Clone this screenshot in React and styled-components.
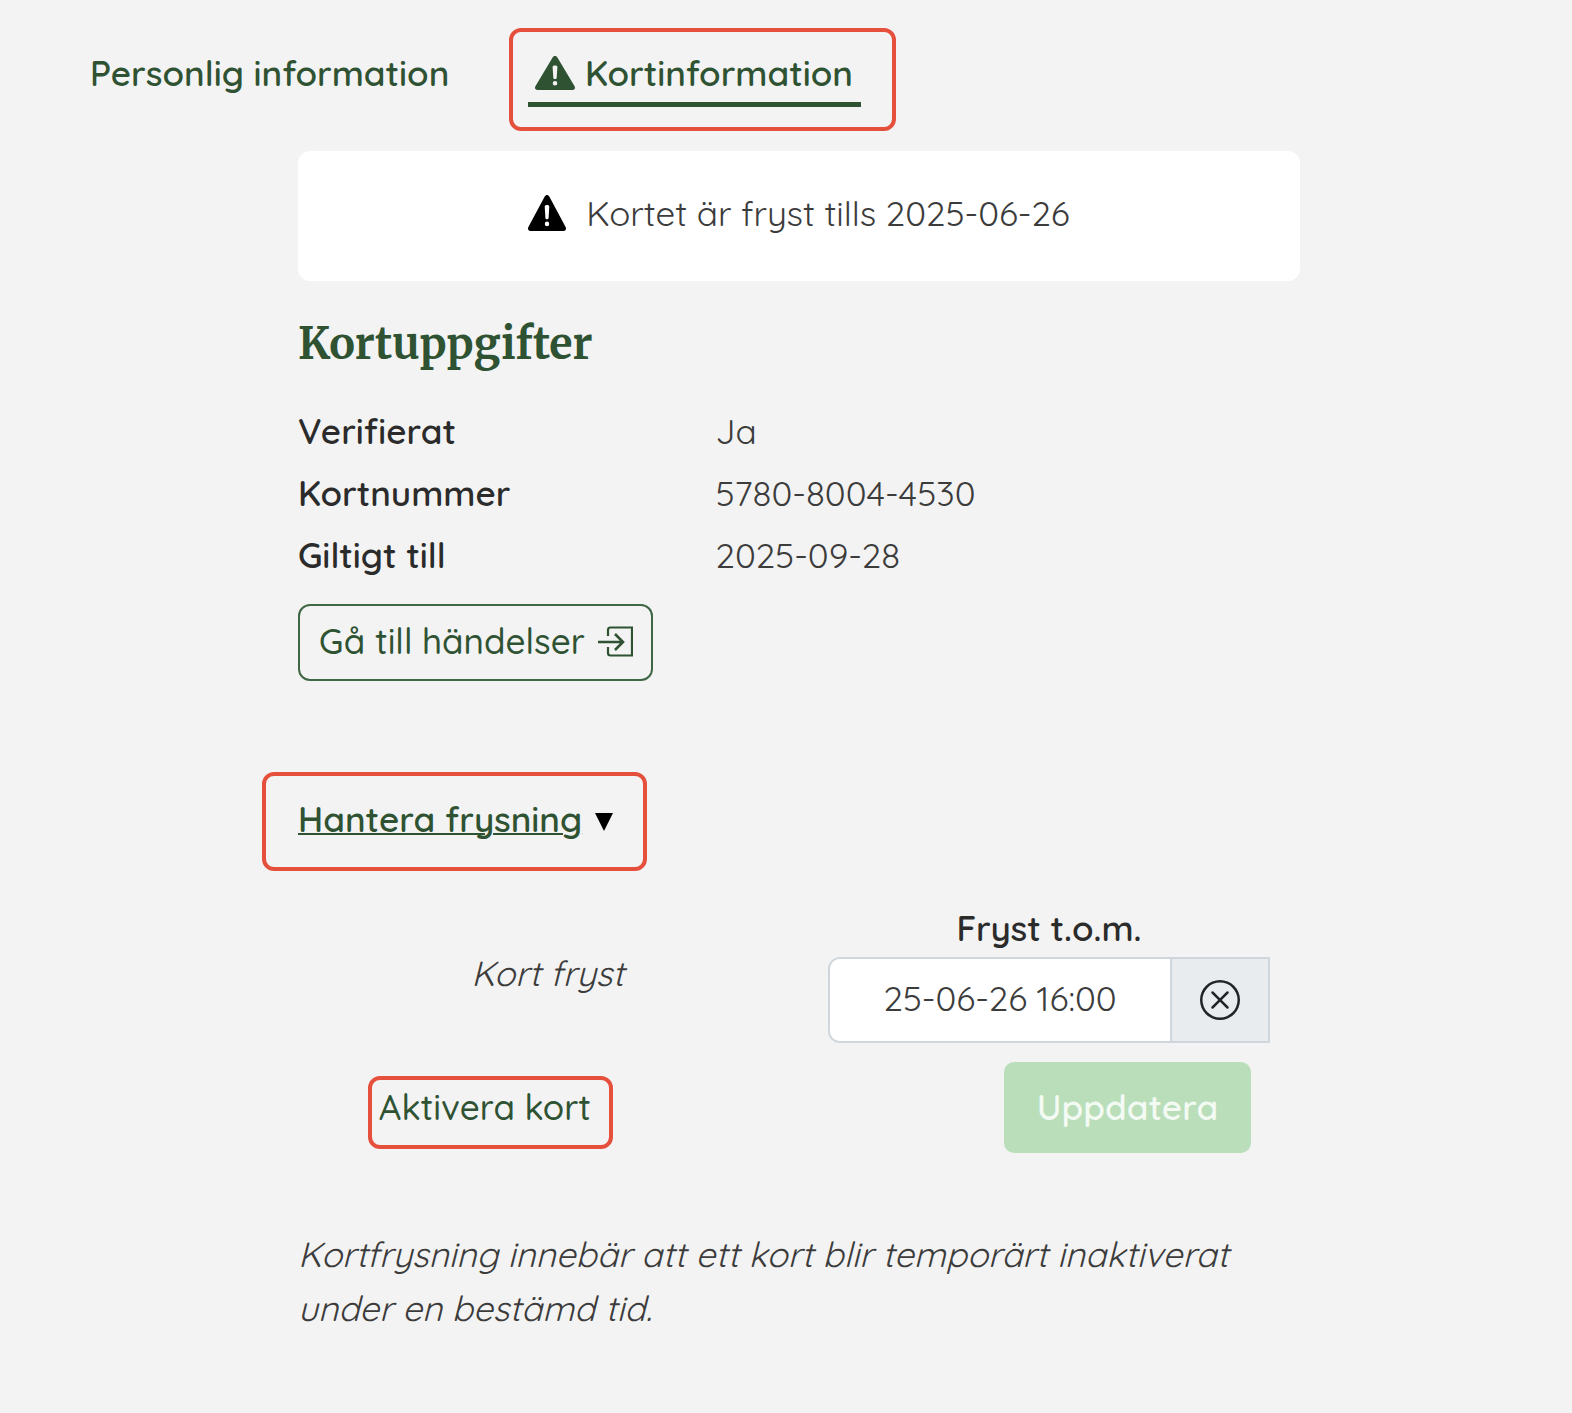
import React, { useState } from "react";
import styled, { createGlobalStyle } from "styled-components";
import { BsXCircle } from "react-icons/bs";

const WarningIcon = ({ width, height }) => (
  <svg
    width={width}
    height={height}
    viewBox="0 0 40 34"
    preserveAspectRatio="none"
    aria-hidden="true"
  >
    <path
      fill="currentColor"
      fillRule="evenodd"
      d="M17.6 1.5c1-2 3.800-2 4.800 0l17.200 28.800c1 1.800 0 3.700-2 3.700H2.400c-2 0-3-1.900-2-3.700zM17.600 11l.7 10.500c.1 1 .6 1.500 1.700 1.500s1.600-.5 1.700-1.500l.7-10.500c0-1-.8-1.500-2.400-1.500s-2.400.5-2.400 1.500zM20 25a2.300 2.300 0 1 0 0 4.600 2.300 2.300 0 0 0 0-4.600z"
    />
  </svg>
);

const EnterIcon = () => (
  <svg
    width="36"
    height="32"
    viewBox="0 0 36 32"
    fill="none"
    stroke="currentColor"
    strokeWidth="2.2"
    aria-hidden="true"
  >
    <path d="M11 11V5q0-2.500 2.500-2.500H35v28H13.500q-2.500 0-2.500-2.500v-6" />
    <path d="M1 17h25M18 9l8 8-8 8" strokeWidth="2.600" />
  </svg>
);

const App = () => {
  const [open, setOpen] = useState(true);
  const [frozenUntil, setFrozenUntil] = useState("25-06-26 16:00");

  return (
    <Page>
      <GlobalStyle />
      <Tabs>
        <Tab href="#person">Personlig information</Tab>
        <TabFrame>
          <ActiveTab href="#kort" aria-current="page">
            <WarningIcon width={40} height={34} />
            Kortinformation
          </ActiveTab>
        </TabFrame>
      </Tabs>
      <Content>
        <Alert role="status">
          <WarningIcon width={38} height={36} />
          Kortet är fryst tills 2025-06-26
        </Alert>
        <Title>Kortuppgifter</Title>
        <Details>
          <Term>Verifierat</Term>
          <Value>Ja</Value>
          <Term>Kortnummer</Term>
          <Value>5780-8004-4530</Value>
          <Term>Giltigt till</Term>
          <Value>2025-09-28</Value>
        </Details>
        <EventsButton type="button">
          Gå till händelser
          <EnterIcon />
        </EventsButton>
        <FreezeFrame>
          <FreezeToggle
            type="button"
            aria-expanded={open}
            onClick={() => setOpen(!open)}
          >
            <span>Hantera frysning</span>
            <Caret viewBox="0 -6 18 24" aria-hidden="true">
              <path d="M0 0h18L9 18z" />
            </Caret>
          </FreezeToggle>
        </FreezeFrame>
        {open && (
          <>
            <FreezeGrid>
              <Status>Kort fryst</Status>
              <DateField>
                <DateLabel htmlFor="frozen-until">Fryst t.o.m.</DateLabel>
                <InputGroup>
                  <DateInput
                    id="frozen-until"
                    value={frozenUntil}
                    onChange={(e) => setFrozenUntil(e.target.value)}
                  />
                  <ClearButton
                    type="button"
                    aria-label="Rensa"
                    onClick={() => setFrozenUntil("")}
                  >
                    <BsXCircle size={40} />
                  </ClearButton>
                </InputGroup>
              </DateField>
              <ActivateFrame>
                <ActivateButton type="button">Aktivera kort</ActivateButton>
              </ActivateFrame>
              <UpdateButton type="button" disabled>
                Uppdatera
              </UpdateButton>
            </FreezeGrid>
            <Note>
              Kortfrysning innebär att ett kort blir temporärt inaktiverat under
              en bestämd tid.
            </Note>
          </>
        )}
      </Content>
    </Page>
  );
};

const GlobalStyle = createGlobalStyle`
  * {
    box-sizing: border-box;
  }
  body {
    margin: 0;
    background-color: #f3f3f3;
    color: #3c3c3c;
    font-family: Quicksand, Lato, sans-serif;
    font-size: 35px;
    line-height: 54px;
  }
  button,
  input {
    font: inherit;
    color: inherit;
  }
  button {
    padding: 0;
    border: none;
    background: none;
    cursor: pointer;
  }
  svg {
    flex: none;
  }
`;

const Page = styled.div`
  min-height: 100vh;
  padding: 28px 0 60px;
`;

const Frame = styled.div`
  width: fit-content;
  border: 4px solid #e5503c;
  border-radius: 12px;
`;

const Tabs = styled.nav`
  display: flex;
  align-items: flex-start;
  gap: 60px;
  padding-left: 90px;
`;

const Tab = styled.a`
  margin-top: 18px;
  width: 359px;
  white-space: nowrap;
  color: #2f5233;
  font-weight: 600;
  text-decoration: none;
`;

const TabFrame = styled(Frame)`
  padding: 14px 31px 20px 15px;
`;

const ActiveTab = styled.a`
  display: flex;
  align-items: center;
  gap: 10px;
  padding: 0 8px 2px 7px;
  border-bottom: 5px solid #2f5233;
  color: #2f5233;
  font-weight: 600;
  text-decoration: none;
`;

const Content = styled.main`
  margin: 20px 272px 0 298px;
`;

const Alert = styled.div`
  display: flex;
  align-items: center;
  justify-content: center;
  gap: 20px;
  height: 130px;
  padding-bottom: 7px;
  border-radius: 12px;
  background-color: #ffffff;

  svg {
    color: #000000;
  }
`;

const Title = styled.h1`
  margin: 33px 0 0;
  color: #2f5233;
  font-family: Merriweather, "DejaVu Serif Condensed", serif;
  font-size: 43px;
  font-weight: 700;
  line-height: 60px;
`;

const Details = styled.dl`
  display: grid;
  grid-template-columns: 5fr 7fr;
  margin: 26px 0 0;
  line-height: 62px;
`;

const Term = styled.dt`
  color: #2b2b2b;
  font-weight: 600;
`;

const Value = styled.dd`
  margin: 0;
`;

const EventsButton = styled.button`
  display: flex;
  align-items: center;
  gap: 12px;
  height: 77px;
  margin-top: 18px;
  padding: 0 18px 4px 19px;
  border: 2px solid #3f6645;
  border-radius: 12px;
  color: #2f5233;
  font-weight: 500;
`;

const FreezeFrame = styled(Frame)`
  margin: 91px 0 0 -36px;
  padding: 16px 30px 21px 32px;
`;

const FreezeToggle = styled.button`
  display: flex;
  align-items: center;
  gap: 13px;
  color: #2f5233;
  font-weight: 600;

  span {
    text-decoration: underline;
    text-decoration-thickness: 2px;
  }
`;

const Caret = styled.svg`
  width: 18px;
  height: 24px;
  fill: #000000;
`;

const FreezeGrid = styled.div`
  display: grid;
  grid-template-columns: 1fr 1fr;
  align-items: center;
  row-gap: 19px;
  margin-top: 32px;
`;

const Status = styled.em`
  justify-self: end;
  margin-right: 175px;
`;

const DateField = styled.div`
  justify-self: end;
  width: 442px;
  margin-right: 30px;
`;

const DateLabel = styled.label`
  display: block;
  padding-bottom: 4px;
  color: #2b2b2b;
  font-weight: 600;
  line-height: 50px;
  text-align: center;
`;

const InputGroup = styled.div`
  display: flex;
  height: 86px;
  border: 2px solid #d0d6de;
  border-radius: 12px 0 0 12px;
  overflow: hidden;
`;

const DateInput = styled.input`
  flex: 1;
  min-width: 0;
  padding: 0 0 4px;
  border: none;
  background-color: #ffffff;
  text-align: center;
`;

const ClearButton = styled.button`
  display: flex;
  align-items: center;
  justify-content: center;
  width: 98px;
  border-left: 2px solid #d0d6de;
  background-color: #e9ecef;
  color: #212529;
`;

const ActivateFrame = styled(Frame)`
  align-self: end;
  justify-self: end;
  margin: 0 186px 4px 0;
`;

const ActivateButton = styled.button`
  display: block;
  padding: 0 18px 11px 7px;
  color: #2f5233;
  font-weight: 500;
`;

const UpdateButton = styled.button`
  justify-self: end;
  width: 247px;
  height: 91px;
  margin-right: 49px;
  padding-bottom: 2px;
  border-radius: 10px;
  background-color: #b9deb9;
  color: #f3faf3;
  font-weight: 600;
`;

const Note = styled.p`
  margin: 74px 0 0;
  font-style: italic;
`;

export default App;
